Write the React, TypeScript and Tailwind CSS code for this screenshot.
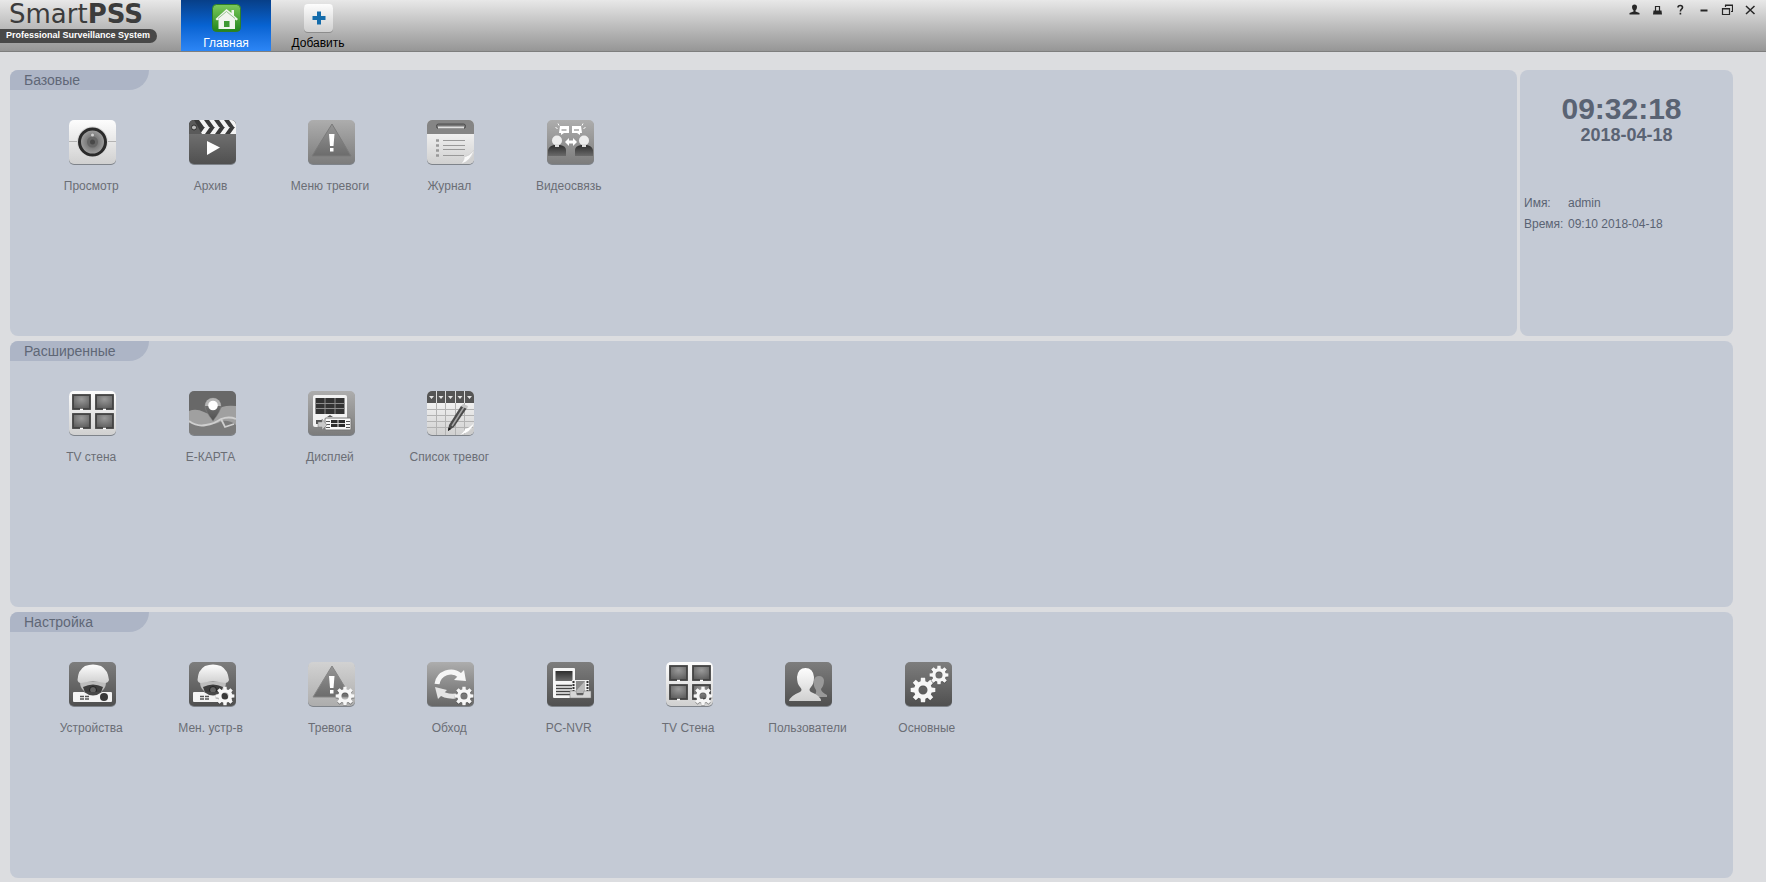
import type { ReactNode } from 'react'

type Tile = { label: string; icon: ReactNode }

// Outline of an eight-toothed gear with a round hole in the middle
function gearPath(cx: number, cy: number, r: number, hole: number) {
  const inner = r * 0.72
  const points: string[] = []
  for (let i = 0; i < 8; i++) {
    const a = (i * Math.PI) / 4
    const steps: [number, number][] = [
      [-0.27, inner],
      [-0.17, r],
      [0.17, r],
      [0.27, inner],
    ]
    for (const [offset, radius] of steps) {
      const x = cx + Math.cos(a + offset) * radius
      const y = cy + Math.sin(a + offset) * radius
      points.push(`${x.toFixed(2)} ${y.toFixed(2)}`)
    }
  }
  return `M${points.join('L')}Z M${cx - hole} ${cy}a${hole} ${hole} 0 1 0 ${hole * 2} 0a${hole} ${hole} 0 1 0 ${-hole * 2} 0Z`
}

function Gear({ cx, cy, r, hole }: { cx: number; cy: number; r: number; hole: number }) {
  return (
    <g fillRule="evenodd">
      <path d={gearPath(cx, cy + 1, r, hole)} fill="#444" opacity="0.5" />
      <path d={gearPath(cx, cy, r, hole)} fill="#f6f6f6" />
    </g>
  )
}

function Gradients() {
  return (
    <svg className="absolute size-0" aria-hidden="true">
      <defs>
        <linearGradient id="light" x1="0" y1="0" x2="0" y2="1">
          <stop offset="0" stopColor="#fdfdfd" />
          <stop offset="1" stopColor="#d0d0d0" />
        </linearGradient>
        <linearGradient id="silver" x1="0" y1="0" x2="0" y2="1">
          <stop offset="0" stopColor="#d2d2d2" />
          <stop offset="1" stopColor="#adadad" />
        </linearGradient>
        <linearGradient id="mid" x1="0" y1="0" x2="0" y2="1">
          <stop offset="0" stopColor="#adadad" />
          <stop offset="1" stopColor="#7c7c7c" />
        </linearGradient>
        <linearGradient id="cycle" x1="0" y1="0" x2="0" y2="1">
          <stop offset="0" stopColor="#adadad" />
          <stop offset="1" stopColor="#676767" />
        </linearGradient>
        <linearGradient id="dark" x1="0" y1="0" x2="0" y2="1">
          <stop offset="0" stopColor="#7d7d7d" />
          <stop offset="1" stopColor="#505050" />
        </linearGradient>
        <linearGradient id="sign" x1="0" y1="0" x2="0" y2="1">
          <stop offset="0" stopColor="#959595" />
          <stop offset="1" stopColor="#6c6c6c" />
        </linearGradient>
        <linearGradient id="deep" x1="0" y1="0" x2="0" y2="1">
          <stop offset="0" stopColor="#2e2e2e" />
          <stop offset="1" stopColor="#6a6a6a" />
        </linearGradient>
        <linearGradient id="green" x1="0" y1="0" x2="0" y2="1">
          <stop offset="0" stopColor="#7cca5c" />
          <stop offset="1" stopColor="#21851b" />
        </linearGradient>
        <radialGradient id="glass">
          <stop offset="0" stopColor="#4a4a4a" />
          <stop offset="0.45" stopColor="#7c7c7c" />
          <stop offset="1" stopColor="#a4a4a4" />
        </radialGradient>
        <radialGradient id="screen" cx="0.5" cy="0.3" r="0.7">
          <stop offset="0" stopColor="#9a9a9a" />
          <stop offset="1" stopColor="#5e5e5e" />
        </radialGradient>
        <clipPath id="tileClip">
          <rect x="1" width="47" height="44" rx="5" />
        </clipPath>
      </defs>
    </svg>
  )
}

function Frame({ fill, children }: { fill: string; children: ReactNode }) {
  return (
    <svg className="h-[46px] w-[49px]" viewBox="0 0 49 46" aria-hidden="true">
      <rect x="1" y="1" width="47" height="44" rx="5" fill="#6d7077" opacity="0.8" />
      <rect x="1" width="47" height="44" rx="5" fill={fill} />
      <g clipPath="url(#tileClip)">{children}</g>
    </svg>
  )
}

function LensIcon() {
  return (
    <Frame fill="url(#light)">
      <path d="M1 21.5H48" stroke="#b3b3b3" />
      <circle cx="24.5" cy="22" r="15.500" fill="#d7d7d7" />
      <circle cx="24.5" cy="22" r="13" fill="url(#glass)" stroke="#2b2b2b" strokeWidth="3" />
      <circle cx="24.5" cy="22" r="5.5" fill="#666" />
      <circle cx="24.5" cy="22" r="2.5" fill="#484848" />
      <circle cx="24.5" cy="15" r="1.500" fill="#d0d0d0" />
    </Frame>
  )
}

function ArchiveIcon() {
  return (
    <Frame fill="url(#dark)">
      <path d="M1 0H48V14H1Z" fill="#3b3b3b" />
      <path
        d="M11 0h5l5 7h-5ZM21 0h5l5 7h-5ZM31 0h5l5 7h-5ZM41 0h5l5 7h-5ZM17 7h5l-5 7h-5ZM27 7h5l-5 7h-5ZM37 7h5l-5 7h-5ZM47 7h2v7h-7Z"
        fill="#f4f4f4"
      />
      <path d="M1 0H6L14 14H1Z" fill="#5a5a5a" />
      <circle cx="6" cy="7.500" r="2.5" fill="#b9b9b9" stroke="#2f2f2f" />
      <path d="M19 21L32 27.5L19 35Z" fill="#fff" />
    </Frame>
  )
}

function Exclamation({ y }: { y: number }) {
  return (
    <g fill="#fff">
      <path d={`M22 ${y}h5.500l-1 12h-3.500Z`} />
      <rect x="23" y={y + 14} width="3.500" height="3.500" />
    </g>
  )
}

function AlarmIcon() {
  return (
    <Frame fill="url(#mid)">
      <path d="M25 4L44 36H5Z" fill="url(#sign)" stroke="#7b7b7b" strokeLinejoin="round" />
      <Exclamation y={14} />
    </Frame>
  )
}

function JournalIcon() {
  return (
    <Frame fill="url(#light)">
      <path d="M1 0H48V14H1Z" fill="#858585" />
      <rect x="10.500" y="4" width="29" height="4.500" rx="2" fill="#777" stroke="#4f4f4f" />
      <path d="M12 7.500H38" stroke="#e0e0e0" strokeWidth="2" />
      <path d="M10 20.500h3M10 25.500h3M10 30.500h3M10 35.500h3" stroke="#999" strokeWidth="2.500" />
      <path d="M17 20.500H39M17 25.500H39M17 29.500H39M17 35.500H38" stroke="#999" />
      <path d="M48 30Q45 41 35 44Q39 39 38 37Q44 36 48 30Z" fill="#fafafa" stroke="#cbcbcb" strokeWidth="0.500" />
      <path d="M48 33V44H37Q45 41 48 33Z" fill="#d0d0d0" />
    </Frame>
  )
}

function VideoIcon() {
  return (
    <Frame fill="url(#mid)">
      <path d="M14 6h9v7h-5l-3 2v-2h-2ZM26 6h9l1 7h-2v2l-3-2h-5Z" fill="#fff" />
      <path d="M15.500 10h5M28 10h5" stroke="#777" />
      <path d="M9.500 7.500l2 1M12 3.500l1 2M39.500 7.500l-2 1M37 3.500l-1 2" stroke="#fff" />
      <path d="M2 36V30Q3 26 8 25H14Q20 26 20 30V36ZM29 36V30Q29 26 35 25H41Q46 26 47 30V36Z" fill="url(#deep)" />
      <circle cx="11" cy="20.500" r="5" fill="#ededed" />
      <circle cx="38" cy="20.500" r="5" fill="#ededed" />
      <path d="M9 24h4v3h-4ZM36 24h4v3h-4Z" fill="#ddd" />
      <path d="M19 22l4-4v2.500h4V18l4 4l-4 4v-2.500h-4V26Z" fill="#fff" />
    </Frame>
  )
}

function Monitors() {
  return (
    <>
      {[4, 27].map((x) =>
        [3, 22].map((y) => (
          <g key={`${x}-${y}`}>
            <rect x={x + 1} y={y + 1} width="17" height="14" fill="url(#screen)" stroke="#424242" strokeWidth="1.800" />
            <path d={`M${x + 8} ${y + 15.5}h3`} stroke="#fff" strokeWidth="1.500" />
          </g>
        )),
      )}
    </>
  )
}

function TvWallIcon() {
  return (
    <Frame fill="url(#light)">
      <Monitors />
    </Frame>
  )
}

function MapIcon() {
  return (
    <Frame fill="#686868">
      <path d="M1 20Q8 17 16 21Q24 26 34 16Q40 14 48 15V44H1Z" fill="#a0a0a0" />
      <path d="M1 32Q10 34 18 34Q27 34 34 30Q42 29 48 34V44H1Z" fill="#7b7b7b" />
      <path d="M1 30Q9 36 18 34Q26 33 33 28Q41 25 48 28M33 28L37 36L46 33" fill="none" stroke="#cfcfcf" strokeWidth="1.800" />
      <path d="M25 30Q17 20 17 15A8 8 0 0 1 33 15Q33 20 25 30Z" fill="url(#dark)" stroke="#858585" strokeWidth="0.500" />
      <path d="M17 15A8 8 0 0 1 33 15Z" fill="#b5b5b5" />
      <circle cx="25" cy="14.500" r="4.800" fill="#fff" />
    </Frame>
  )
}

function DisplayIcon() {
  return (
    <Frame fill="url(#mid)">
      <rect x="6" y="4" width="34" height="32" rx="2" fill="#f2f2f2" />
      <rect x="8.500" y="7" width="29" height="16" fill="#333" />
      <path d="M18 7v16M28 7v16M8 12.500h30M8 17.500h30" stroke="#8d8d8d" />
      <path d="M9 29h6v4h-6ZM20 26l3-2l3 2Z" fill="#555" />
      <rect x="18" y="27" width="26" height="12" rx="1" fill="#f8f8f8" stroke="#777" />
      <path d="M24 29h14v7h-14Z" fill="#2c2c2c" />
      <path d="M31 29v7M24 32.500h14" stroke="#ddd" />
      <path d="M19 30.500h4M19 33.500h4M39 30.500h4M39 33.500h4M19 36.500h4M39 36.500h4" stroke="#555" />
      <path d="M11 31h4v-3l5 6l-5 5v-3h-4Z" fill="#c9c9c9" stroke="#777" strokeWidth="0.500" />
    </Frame>
  )
}

function AlarmListIcon() {
  return (
    <Frame fill="url(#light)">
      <path d="M1 18.500H48M1 24.500H48M1 30.500H48M1 36.500H48M10.500 12V44M19.500 12V44M29.500 12V44M38.500 12V44" stroke="#b3b3b3" />
      <path d="M1 0H48V12H1Z" fill="#555" />
      <path d="M10.500 0V12M19.500 0V12M29.500 0V12M38.500 0V12" stroke="#ddd" />
      <path d="M3 5h5l-2.500 3ZM12.500 5h5l-2.500 3ZM22 5h5l-2.500 3ZM31.500 5h5l-2.500 3ZM41 5h5l-2.500 3Z" fill="#e4e4e4" />
      <path d="M22 40L23 34L35 15L41 17L28 36Z" fill="#4b4b4b" />
      <path d="M26 35L38 16" stroke="#a5a5a5" strokeWidth="1.500" />
      <path d="M35 15L37 13L42 15L41 18Z" fill="#c4c4c4" />
      <path d="M22 40L22.500 36.500L25 38Z" fill="#111" />
      <path d="M48 32Q45 41 34 44Q39 40 39 38Q44 37 48 32Z" fill="#fff" />
      <path d="M48 35V44H37Q45 41 48 35Z" fill="#ccc" />
    </Frame>
  )
}

function DomeCamera() {
  return (
    <>
      <path d="M12 20H38Q38 26 34 29Q30 34 25 34Q20 34 16 29Q12 26 12 20Z" fill="#bdbdbd" />
      <path d="M15 25Q25 20 35 25Q33 34 25 34Q17 34 15 25Z" fill="#3e3e3e" />
      <circle cx="25" cy="28" r="3.500" fill="#636363" stroke="#222" />
      <path d="M9.500 18Q10 8 17 4Q25 1 33 4Q40 8 41 18Q40 21 37 21Q25 18 13 21Q10 21 9.500 18Z" fill="url(#light)" />
      <rect x="5" y="30" width="39" height="10" rx="1" fill="#f3f3f3" />
      <path d="M16 30Q25 37 34 30Z" fill="#484848" />
      <path d="M12 34.500h4M17 34.500h4M12 37h4M17 37h4" stroke="#555" strokeWidth="1.500" />
      <circle cx="36" cy="35" r="4" fill="#383838" />
    </>
  )
}

function DevicesIcon() {
  return (
    <Frame fill="url(#dark)">
      <DomeCamera />
    </Frame>
  )
}

function DeviceSetupIcon() {
  return (
    <Frame fill="url(#dark)">
      <DomeCamera />
      <Gear cx={37} cy={34} r={9.5} hole={3.5} />
    </Frame>
  )
}

function AlarmSetupIcon() {
  return (
    <Frame fill="url(#silver)">
      <path d="M25 4L44 35H6Z" fill="url(#sign)" stroke="#858585" strokeLinejoin="round" />
      <Exclamation y={14} />
      <Gear cx={38} cy={34} r={9.5} hole={3.5} />
    </Frame>
  )
}

function TourIcon() {
  return (
    <Frame fill="url(#cycle)">
      <path d="M11 22A14 14 0 0 1 34 13.500" fill="none" stroke="#f6f6f6" strokeWidth="5" />
      <path d="M38 8L40 19L28 18Z" fill="#f6f6f6" />
      <path d="M14 30Q19 35 30 34" fill="none" stroke="#e4e4e4" strokeWidth="5" />
      <path d="M9 25L21 28L12 37Z" fill="#e4e4e4" />
      <Gear cx={38} cy={34} r={9.5} hole={3.5} />
    </Frame>
  )
}

function NvrIcon() {
  return (
    <Frame fill="url(#dark)">
      <rect x="7" y="6" width="22" height="30" rx="1" fill="#f6f6f6" />
      <rect x="9.500" y="9" width="17" height="10" fill="url(#deep)" />
      <path d="M10 23.500h16M10 26.500h16M10 29.500h16M10 32.500h16" stroke="#444" strokeWidth="1.500" />
      <path d="M26 18H43V31H26Z" fill="#eee" />
      <path d="M27.500 19V31M41.500 19V31" stroke="#333" strokeWidth="2" strokeDasharray="2 1" />
      <path d="M30 19H39V31H30Z" fill="#8b8b8b" />
      <path d="M30 29L39 19V31H30Z" fill="#bababa" />
      <path d="M24 29H30L31 33H37L38 29H45V36H24Z" fill="#d6d6d6" stroke="#777" strokeWidth="0.500" />
    </Frame>
  )
}

function TvWallSetupIcon() {
  return (
    <Frame fill="url(#light)">
      <Monitors />
      <Gear cx={38} cy={34} r={9.5} hole={3.5} />
    </Frame>
  )
}

function UsersIcon() {
  return (
    <Frame fill="url(#dark)">
      <path d="M29 35Q33 31 32 28Q29 24 30 18Q31 14 35 14Q39 14 40 18Q40 24 37 27Q37 30 43 33V35Z" fill="#999" />
      <path
        d="M5 39Q6 34 16 30Q19 28 16 25Q13 22 13 15Q14 6 21.500 6Q29 6 30 15Q30 22 27 25Q24 28 27 30Q37 34 37 39Z"
        fill="url(#light)"
      />
    </Frame>
  )
}

function GeneralIcon() {
  return (
    <Frame fill="url(#dark)">
      <Gear cx={19} cy={28} r={12.5} hole={4.5} />
      <Gear cx={35} cy={13} r={9.5} hole={3.5} />
    </Frame>
  )
}

const basic: Tile[] = [
  { label: 'Просмотр', icon: <LensIcon /> },
  { label: 'Архив', icon: <ArchiveIcon /> },
  { label: 'Меню тревоги', icon: <AlarmIcon /> },
  { label: 'Журнал', icon: <JournalIcon /> },
  { label: 'Видеосвязь', icon: <VideoIcon /> },
]

const advanced: Tile[] = [
  { label: 'TV стена', icon: <TvWallIcon /> },
  { label: 'Е-КАРТА', icon: <MapIcon /> },
  { label: 'Дисплей', icon: <DisplayIcon /> },
  { label: 'Список тревог', icon: <AlarmListIcon /> },
]

const settings: Tile[] = [
  { label: 'Устройства', icon: <DevicesIcon /> },
  { label: 'Мен. устр-в', icon: <DeviceSetupIcon /> },
  { label: 'Тревога', icon: <AlarmSetupIcon /> },
  { label: 'Обход', icon: <TourIcon /> },
  { label: 'PC-NVR', icon: <NvrIcon /> },
  { label: 'TV Стена', icon: <TvWallSetupIcon /> },
  { label: 'Пользователи', icon: <UsersIcon /> },
  { label: 'Основные', icon: <GeneralIcon /> },
]

const windowButtons: Tile[] = [
  {
    label: 'Пользователь',
    icon: <path d="M5.500 0.500Q8 0.500 8 3Q8 5 6.500 6.500V7.500L10.500 9V10.500H0.500V9L4.500 7.500V6.500Q3 5 3 3Q3 0.500 5.500 0.500Z" fill="currentColor" />,
  },
  {
    label: 'Блокировка',
    icon: (
      <>
        <path d="M3.500 7V2.500H7.500V7" fill="none" stroke="currentColor" strokeWidth="1.200" />
        <path d="M1.500 6.500H9.500L10 10.500H1Z" fill="currentColor" />
      </>
    ),
  },
  {
    label: 'Справка',
    icon: (
      <path
        d="M3 3.500Q3 1.500 5.300 1.500Q7.500 1.500 7.500 3.500Q7.500 4.500 6.300 5.300Q5.400 6 5.400 7.500M5.400 8.800V10.500"
        fill="none"
        stroke="currentColor"
        strokeWidth="1.600"
      />
    ),
  },
  { label: 'Свернуть', icon: <path d="M2.500 5.500H9.500V7.500H2.500Z" fill="currentColor" /> },
  {
    label: 'Развернуть',
    icon: (
      <path
        d="M1.500 4.500H8.500V10.500H1.500ZM1 5H9M4.500 3V1.500H11.500V7.500H10M4 1H12"
        fill="none"
        stroke="currentColor"
        strokeWidth="1.200"
      />
    ),
  },
  { label: 'Закрыть', icon: <path d="M2 2L10.500 10M10.500 2L2 10" stroke="currentColor" strokeWidth="1.500" /> },
]

function Panel({ title, tiles }: { title: string; tiles: Tile[] }) {
  return (
    <section className="min-h-[266px] min-w-0 flex-1 overflow-hidden rounded-lg bg-[#c4cad5]">
      <h2 className="h-5 w-[139px] rounded-br-[20px] bg-[#adb5c6] pl-3.5 text-[14px] leading-5 text-[#5f6776]">
        {title}
      </h2>
      <div className="mt-[30px] ml-[23px] grid max-w-[955px] grid-cols-8">
        {tiles.map((tile) => (
          <button key={tile.label} className="flex flex-col items-center gap-3 text-[12px] leading-4 text-[#6b6e75]">
            {tile.icon}
            <span className="pr-[3px] whitespace-nowrap">{tile.label}</span>
          </button>
        ))}
      </div>
    </section>
  )
}

function Header() {
  return (
    <header className="flex h-[52px] justify-between border-b border-[#7e7e7e] bg-linear-to-b from-[#e8e8e8] to-[#969696]">
      <div className="flex">
        <div className="w-[181px]">
          <h1 className="pl-[9px] font-['DejaVu_Sans',sans-serif] text-[26px] leading-[29px] text-[#3c3c3c]">
            Smart<b>PSS</b>
          </h1>
          <p className="h-3.5 w-[157px] rounded-r-full bg-[#484848] pl-1.5 text-[9px] leading-[13px] font-bold whitespace-nowrap text-white">
            Professional Surveillance System
          </p>
        </div>
        <nav className="flex text-[12px] leading-4">
          <button className="flex w-[90px] flex-col items-center gap-0.5 bg-linear-to-b from-[#073f88] via-[#0763d2] to-[#2c86f6] pt-1 text-white">
            <svg className="size-[29px]" viewBox="0 0 29 29" aria-hidden="true">
              <rect x="0.500" y="0.500" width="28" height="27" rx="4" fill="url(#green)" stroke="#2f7f28" />
              <path d="M14.500 5L3.500 15L5 16.500L6.500 15.500V25H23V15.500L24.500 16.500L26 15L22 11.500V6H19.500V9Z" fill="#f1f5ef" />
              <path d="M6 14.500L14.500 7.500L23 14.500" fill="none" stroke="#7fb676" strokeWidth="0.800" />
              <rect x="12" y="17" width="5.500" height="6" fill="#3f9a34" />
            </svg>
            Главная
          </button>
          <button className="flex w-[94px] flex-col items-center gap-0.5 pt-1 text-black">
            <svg className="size-[29px]" viewBox="0 0 29 29" aria-hidden="true">
              <rect y="1" width="29" height="28" rx="4" fill="#8d8d8d" />
              <rect width="29" height="28" rx="4" fill="url(#light)" />
              <path d="M13 7.500h4v4.500h4.500v4h-4.500v4.500h-4v-4.500H8.500v-4h4.500Z" fill="#146cab" />
            </svg>
            Добавить
          </button>
        </nav>
      </div>
      <div className="flex items-start gap-[11px] pt-1 pr-2.5 text-[#262626]">
        {windowButtons.map((button) => (
          <button key={button.label} aria-label={button.label}>
            <svg className="size-3" viewBox="0 0 12 12" aria-hidden="true">
              {button.icon}
            </svg>
          </button>
        ))}
      </div>
    </header>
  )
}

export default function App() {
  return (
    <div className="min-h-screen bg-[#dcdde0] font-['Liberation_Sans',Arial,sans-serif]">
      <Gradients />
      <Header />
      <main className="flex flex-col gap-[5px] pt-[18px] pr-[33px] pb-1 pl-2.5">
        <div className="flex gap-[3px]">
          <Panel title="Базовые" tiles={basic} />
          <aside className="w-[213px] rounded-lg bg-[#c4cad5] text-[#5a6373]">
            <p className="pt-[23px] pr-2.5 text-center text-[30px] leading-8 font-bold">09:32:18</p>
            <p className="text-center text-[18px] leading-5 font-bold">2018-04-18</p>
            <dl className="mt-[50px] grid grid-cols-[44px_1fr] gap-y-[5px] pl-1 text-[12px] leading-4">
              <dt>Имя:</dt>
              <dd>admin</dd>
              <dt>Время:</dt>
              <dd>09:10 2018-04-18</dd>
            </dl>
          </aside>
        </div>
        <Panel title="Расширенные" tiles={advanced} />
        <Panel title="Настройка" tiles={settings} />
      </main>
    </div>
  )
}
